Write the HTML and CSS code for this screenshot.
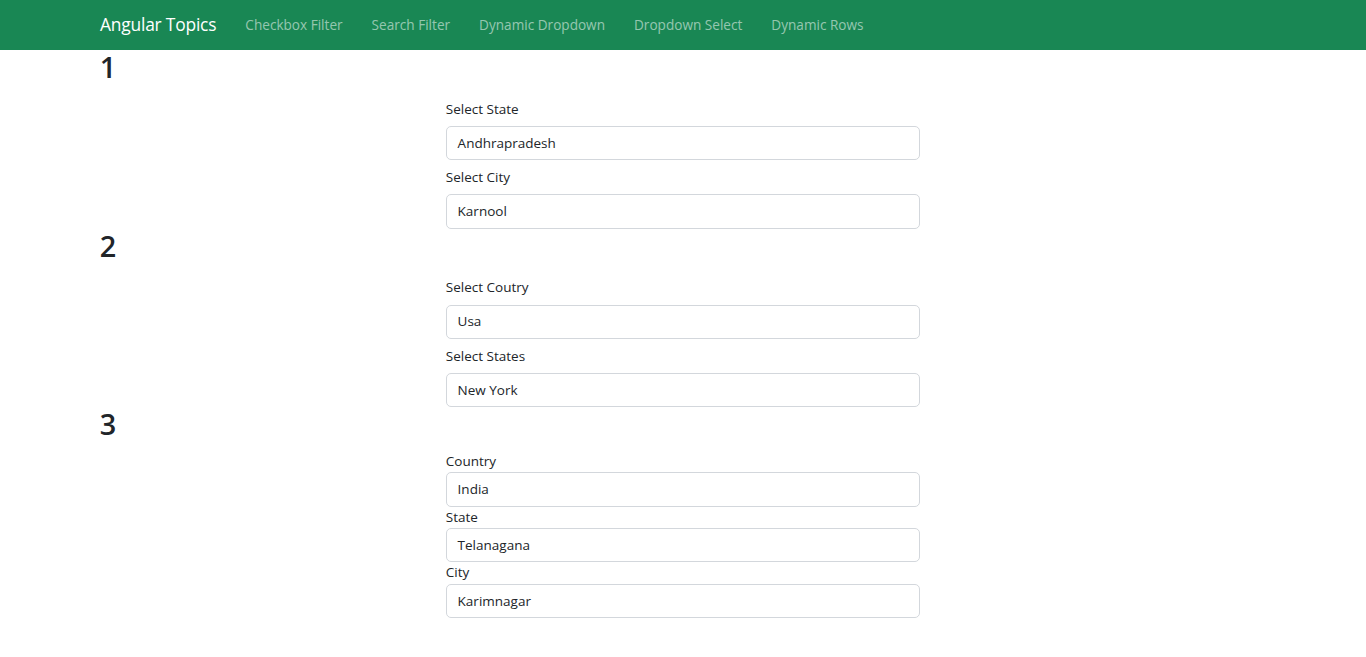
FILE: index.html
```html
<!DOCTYPE html>
<html lang="en">
<head>
<meta charset="utf-8">
<title>Angular Topics</title>
<link rel="stylesheet" href="styles.css">
</head>
<body>
<nav class="navbar">
  <a class="brand" href="#">Angular Topics</a>
  <ul class="nav">
    <li><a href="#">Checkbox Filter</a></li>
    <li><a href="#">Search Filter</a></li>
    <li><a href="#">Dynamic Dropdown</a></li>
    <li><a href="#">Dropdown Select</a></li>
    <li><a href="#">Dynamic Rows</a></li>
  </ul>
</nav>
<main class="container">
  <h2 class="num">1</h2>
  <form class="form spaced">
    <div class="group">
      <label class="label">Select State</label>
      <div class="input">Andhrapradesh</div>
    </div>
    <div class="group">
      <label class="label">Select City</label>
      <div class="input">Karnool</div>
    </div>
  </form>
  <h2 class="num">2</h2>
  <form class="form spaced">
    <div class="group">
      <label class="label">Select Coutry</label>
      <div class="input">Usa</div>
    </div>
    <div class="group">
      <label class="label">Select States</label>
      <div class="input">New York</div>
    </div>
  </form>
  <h2 class="num">3</h2>
  <form class="form tight">
    <label class="label">Country</label>
    <div class="input">India</div>
    <label class="label">State</label>
    <div class="input">Telanagana</div>
    <label class="label">City</label>
    <div class="input">Karimnagar</div>
  </form>
</main>
</body>
</html>
```
FILE: styles.css
```css
* { box-sizing: border-box; }
html, body { margin: 0; padding: 0; }
body {
  font-family: "Open Sans", "Noto Sans", sans-serif;
  font-size: 14.4px;
  line-height: 1.5;
  color: #212529;
  background: #fff;
}
.navbar {
  height: 50px;
  background: #198754;
  display: flex;
  align-items: center;
  padding-left: 100px;
}
.brand {
  color: #fff;
  text-decoration: none;
  font-size: 17.4px;
  line-height: 1;
  margin-right: 29px;
  letter-spacing: -0.2px;
}
.nav {
  list-style: none;
  margin: 0;
  padding: 0;
  display: flex;
  gap: 29px;
}
.nav a {
  color: rgba(255, 255, 255, 0.55);
  text-decoration: none;
  font-size: 13.6px;
  line-height: 1;
}
.container {
  width: 1188px;
  margin: 0 auto;
  padding: 0 10.8px;
}
.num {
  font-size: 28.8px;
  font-weight: 600;
  line-height: 1.2;
  margin: 0 0 7.2px;
}
.form {
  width: 474px;
  margin-left: 346px;
}
.spaced { padding-top: 5.5px; }
.spaced .group + .group { margin-top: 5.4px; }
.spaced .label {
  padding-top: 1.5px;
  margin-bottom: 5.7px;
}
.tight { padding-top: 2px; }
.label {
  display: block;
  font-size: 13.5px;
  line-height: 21.6px;
}
.input {
  height: 34.2px;
  border: 1px solid #d3d7dc;
  border-radius: 5px;
  padding: 5.8px 10.8px 4.8px;
  font-size: 13.5px;
  line-height: 21.6px;
  color: #212529;
  background: #fff;
}
```
